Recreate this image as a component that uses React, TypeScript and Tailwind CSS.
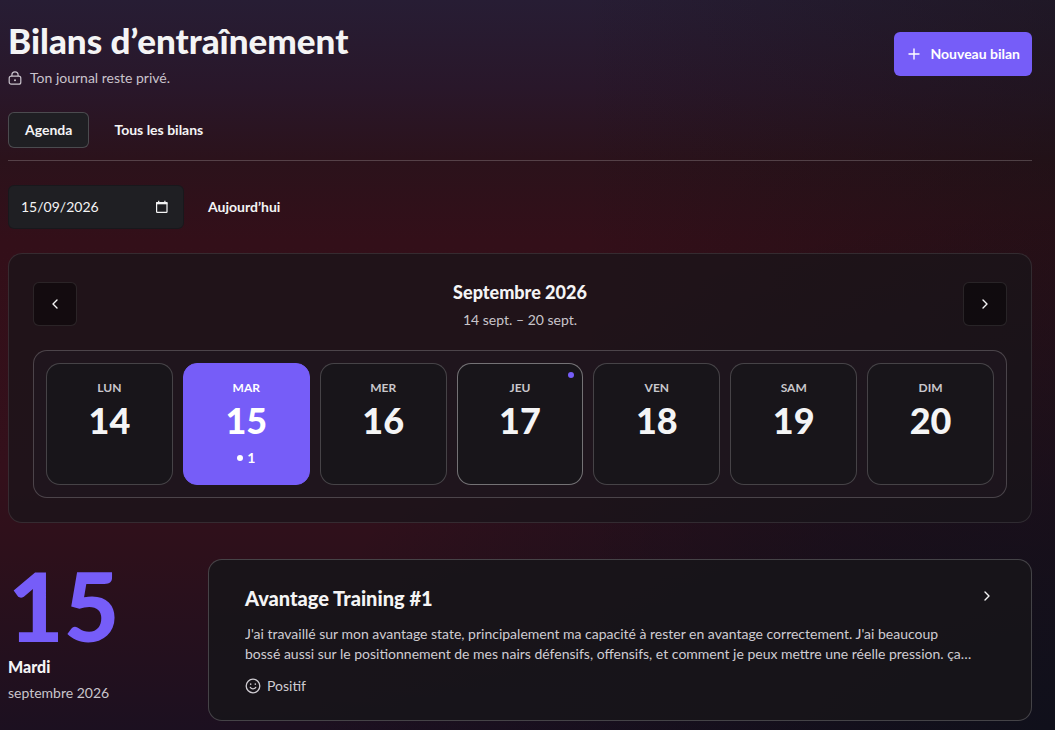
import React, { useState } from 'react';

interface Day {
    label: string;
    number: number;
    count?: number;
    isToday?: boolean;
}

const WEEK: Day[] = [
    { label: 'LUN', number: 14 },
    { label: 'MAR', number: 15, count: 1 },
    { label: 'MER', number: 16 },
    { label: 'JEU', number: 17, isToday: true },
    { label: 'VEN', number: 18 },
    { label: 'SAM', number: 19 },
    { label: 'DIM', number: 20 },
];

const LockIcon = () => (
    <svg width="14" height="14" viewBox="0 0 14 14" fill="none" stroke="currentColor" strokeWidth="1.2" aria-hidden="true">
        <rect x="1.2" y="5.2" width="11.6" height="8" rx="2" />
        <path d="M3.9 5.2V3.9a3.1 3.1 0 0 1 6.2 0v1.3" />
        <circle cx="7" cy="9.2" r="1" fill="currentColor" stroke="none" />
    </svg>
);

const PlusIcon = () => (
    <svg width="16" height="16" viewBox="0 0 16 16" fill="none" stroke="currentColor" strokeWidth="1.4" strokeLinecap="round" aria-hidden="true">
        <path d="M8 3v10M3 8h10" />
    </svg>
);

const CalendarIcon = () => (
    <svg width="14" height="14" viewBox="0 0 14 14" fill="none" stroke="currentColor" aria-hidden="true">
        <rect x="1.6" y="2.6" width="10.4" height="9.8" rx="0.6" strokeWidth="1.2" />
        <path d="M1.2 3.2h11.2" strokeWidth="2.2" />
        <path d="M3.7 0.8v2M9.9 0.8v2" strokeWidth="1.2" />
    </svg>
);

const Chevron = ({ direction }: { direction: 'left' | 'right' }) => (
    <svg width="16" height="16" viewBox="0 0 16 16" fill="none" stroke="currentColor" strokeWidth="1.4" strokeLinecap="round" strokeLinejoin="round" aria-hidden="true">
        <path d={direction === 'left' ? 'M10 4 6 8l4 4' : 'M6 4l4 4-4 4'} />
    </svg>
);

const SmileIcon = () => (
    <svg width="16" height="16" viewBox="0 0 16 16" fill="none" stroke="currentColor" strokeWidth="1.3" strokeLinecap="round" aria-hidden="true">
        <circle cx="8" cy="8" r="6.8" />
        <path d="M5.3 9.4c.6 1 1.6 1.5 2.7 1.5s2.1-.5 2.7-1.5" />
        <path d="M5.7 6.1v.2M10.3 6.1v.2" strokeWidth="1.5" />
    </svg>
);

export default function App() {
    const [tab, setTab] = useState('agenda');
    const [date, setDate] = useState('15/09/2026');
    const [selected, setSelected] = useState(15);

    const tabClass = (name: string) =>
        tab === name ? 'border-white/20 bg-[#1f1f23]' : 'border-transparent';

    return (
        <div className="min-h-screen bg-[#14101b] bg-[radial-gradient(ellipse_at_100%_100%,#10101b_0%,rgba(18,15,28,0.65)_22%,transparent_50%),linear-gradient(90deg,transparent_55%,rgba(20,16,18,0.4)_100%),linear-gradient(180deg,#271d34_0%,#29172a_12%,#2b121b_22%,#330f19_33%,#34101b_64%,#2d101b_76%,#1c1020_100%)] pt-5 pr-[23px] pb-2 pl-2 font-['Lato',sans-serif] text-sm text-[#f4f4f5]">
            {/* Header */}
            <header className="flex items-center justify-between">
                <div>
                    <h1 className="text-[35px] leading-10 font-black">Bilans d’entraînement</h1>
                    <p className="mt-2 flex items-center gap-2 text-[#c9c3cc]">
                        <LockIcon />
                        Ton journal reste privé.
                    </p>
                </div>
                <button className="flex h-11 items-center gap-2 rounded-md bg-[#765df8] px-3 font-bold text-white">
                    <PlusIcon />
                    Nouveau bilan
                </button>
            </header>

            {/* Tabs */}
            <nav className="mt-6 flex gap-2 border-b border-white/20 pb-3 font-bold">
                <button onClick={() => setTab('agenda')} className={`h-9 rounded-md border px-4 ${tabClass('agenda')}`}>
                    Agenda
                </button>
                <button onClick={() => setTab('all')} className={`h-9 rounded-md border px-4 ${tabClass('all')}`}>
                    Tous les bilans
                </button>
            </nav>

            {/* Date picker */}
            <div className="mt-6 flex items-center gap-6">
                <div className="flex h-11 w-44 items-center rounded-md border border-black/20 bg-[#1f1f23] px-3">
                    <input
                        aria-label="Date"
                        value={date}
                        onChange={(e) => setDate(e.target.value)}
                        className="min-w-0 flex-1 bg-transparent outline-none"
                    />
                    <button aria-label="Ouvrir le calendrier" className="mr-0.5">
                        <CalendarIcon />
                    </button>
                </div>
                <button className="font-bold" onClick={() => setSelected(17)}>Aujourd’hui</button>
            </div>

            {/* Week */}
            <section className="mt-6 rounded-[14px] border border-white/10 bg-[#18161a]/70 p-6">
                <div className="flex items-start justify-between">
                    <button aria-label="Semaine précédente" className="mt-1 flex size-11 items-center justify-center rounded-md border border-white/10 bg-black/40">
                        <Chevron direction="left" />
                    </button>
                    <div className="text-center">
                        <h2 className="text-lg leading-7 font-black">Septembre 2026</h2>
                        <p className="leading-7 text-[#c9c5cb]">14 sept. – 20 sept.</p>
                    </div>
                    <button aria-label="Semaine suivante" className="mt-1 flex size-11 items-center justify-center rounded-md border border-white/10 bg-black/40">
                        <Chevron direction="right" />
                    </button>
                </div>

                <div className="mt-4 grid grid-cols-7 gap-2.5 rounded-[14px] border border-white/20 bg-[#1f1720]/60 p-3">
                    {WEEK.map(day => {
                        const active = day.number === selected;
                        const look = active
                            ? 'border-[#765df8] bg-[#765df8] text-white'
                            : day.isToday ? 'border-white/40 bg-[#18151a]' : 'border-white/20 bg-[#18151a]';

                        return (
                            <button
                                key={day.number}
                                onClick={() => setSelected(day.number)}
                                className={`relative flex h-[122px] flex-col items-center rounded-[14px] border pt-3.5 ${look}`}
                            >
                                {day.isToday && <span className="absolute top-2 right-2 size-1.5 rounded-full bg-[#765df8]" />}
                                <span className={`text-xs leading-5 font-bold ${active ? '' : 'text-[#c9c7cc]'}`}>{day.label}</span>
                                <span className="text-4xl leading-11 font-black">{day.number}</span>
                                {day.count && (
                                    <span className="mt-1.5 flex items-center gap-1 leading-5 font-bold">
                                        <span className="size-1.5 rounded-full bg-white" />
                                        {day.count}
                                    </span>
                                )}
                            </button>
                        );
                    })}
                </div>
            </section>

            {/* Selected day */}
            <section className="mt-9 grid grid-cols-[176px_1fr] gap-6">
                <div>
                    <p className="mb-1 text-8xl leading-23 font-black text-[#765df8]">{selected}</p>
                    <h2 className="text-base leading-6 font-black">Mardi</h2>
                    <p className="leading-7 text-[#c9c5cb]">septembre 2026</p>
                </div>
                <a href="#bilan" className="flex h-fit items-start justify-between rounded-[14px] border border-white/20 bg-[#17151a]/90 px-9 py-6">
                    <div className="max-w-[728px]">
                        <h3 className="text-xl leading-7 font-black">Avantage Training #1</h3>
                        <p className="mt-3 line-clamp-2 leading-5 text-[#cfccd2]">
                            J'ai travaillé sur mon avantage state, principalement ma capacité à rester en avantage correctement. J'ai beaucoup bossé aussi sur le positionnement de mes nairs défensifs, offensifs, et comment je peux mettre une réelle pression. ça…
                        </p>
                        <p className="mt-3 flex items-center gap-1.5 leading-5 text-[#cfccd2]">
                            <SmileIcon />
                            Positif
                        </p>
                    </div>
                    <div className="pt-1">
                        <Chevron direction="right" />
                    </div>
                </a>
            </section>
        </div>
    );
}
